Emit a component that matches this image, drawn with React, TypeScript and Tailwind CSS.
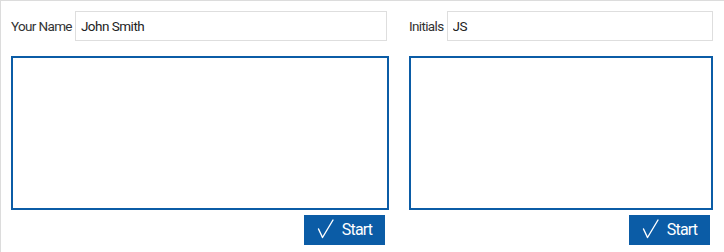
import React from "react";

type FieldProps = {
  label: string;
  value: string;
  inputGap: string;
  buttonInset: string;
  width: string;
};

const Column = ({ label, value, inputGap, buttonInset, width }: FieldProps) => (
  <div className={`flex flex-col ${width}`}>
    <div className={`flex h-[30px] items-center ${inputGap}`}>
      <span className="mr-[3px] shrink-0 text-[13.5px] tracking-[-0.65px] text-[#333]">{label}</span>
      <input
        readOnly
        value={value}
        className="h-[30px] min-w-0 flex-1 border border-[#dedede] bg-white px-[5px] text-[13.5px] tracking-[-0.5px] text-[#222] outline-none"
      />
    </div>
    <textarea
      readOnly
      className="mt-[15px] h-[154px] w-full resize-none border-2 border-[#0b5ca6] bg-white outline-none"
    />
    <div className={`mt-[5px] flex justify-end ${buttonInset}`}>
      <button
        type="button"
        className="flex h-[30px] w-[81px] items-center justify-center gap-[8px] bg-[#0b5ca6] text-[16px] tracking-[-0.8px] text-white"
      >
        <svg width="17" height="20" viewBox="0 0 17 20" fill="none" className="-mt-[3px]">
          <polyline
            points="1.5,10 5.5,18.5 16,1"
            stroke="white"
            strokeWidth="1.4"
            strokeLinecap="round"
            strokeLinejoin="round"
          />
        </svg>
        <span>Start</span>
      </button>
    </div>
  </div>
);

export default function App() {
  return (
    <div
      className="flex h-[252px] w-[724px] gap-[20px] border-l border-t border-[#dcdcdc] bg-white pl-[10px] pr-[11px] pt-[10px]"
      style={{ fontFamily: "Roboto, 'Liberation Sans', sans-serif" }}
    >
      <Column label="Your Name" value="John Smith" inputGap="pr-[2px]" buttonInset="pr-[4px]" width="w-[378px]" />
      <Column label="Initials" value="JS" inputGap="" buttonInset="pr-[3px]" width="w-[304px]" />
    </div>
  );
}
